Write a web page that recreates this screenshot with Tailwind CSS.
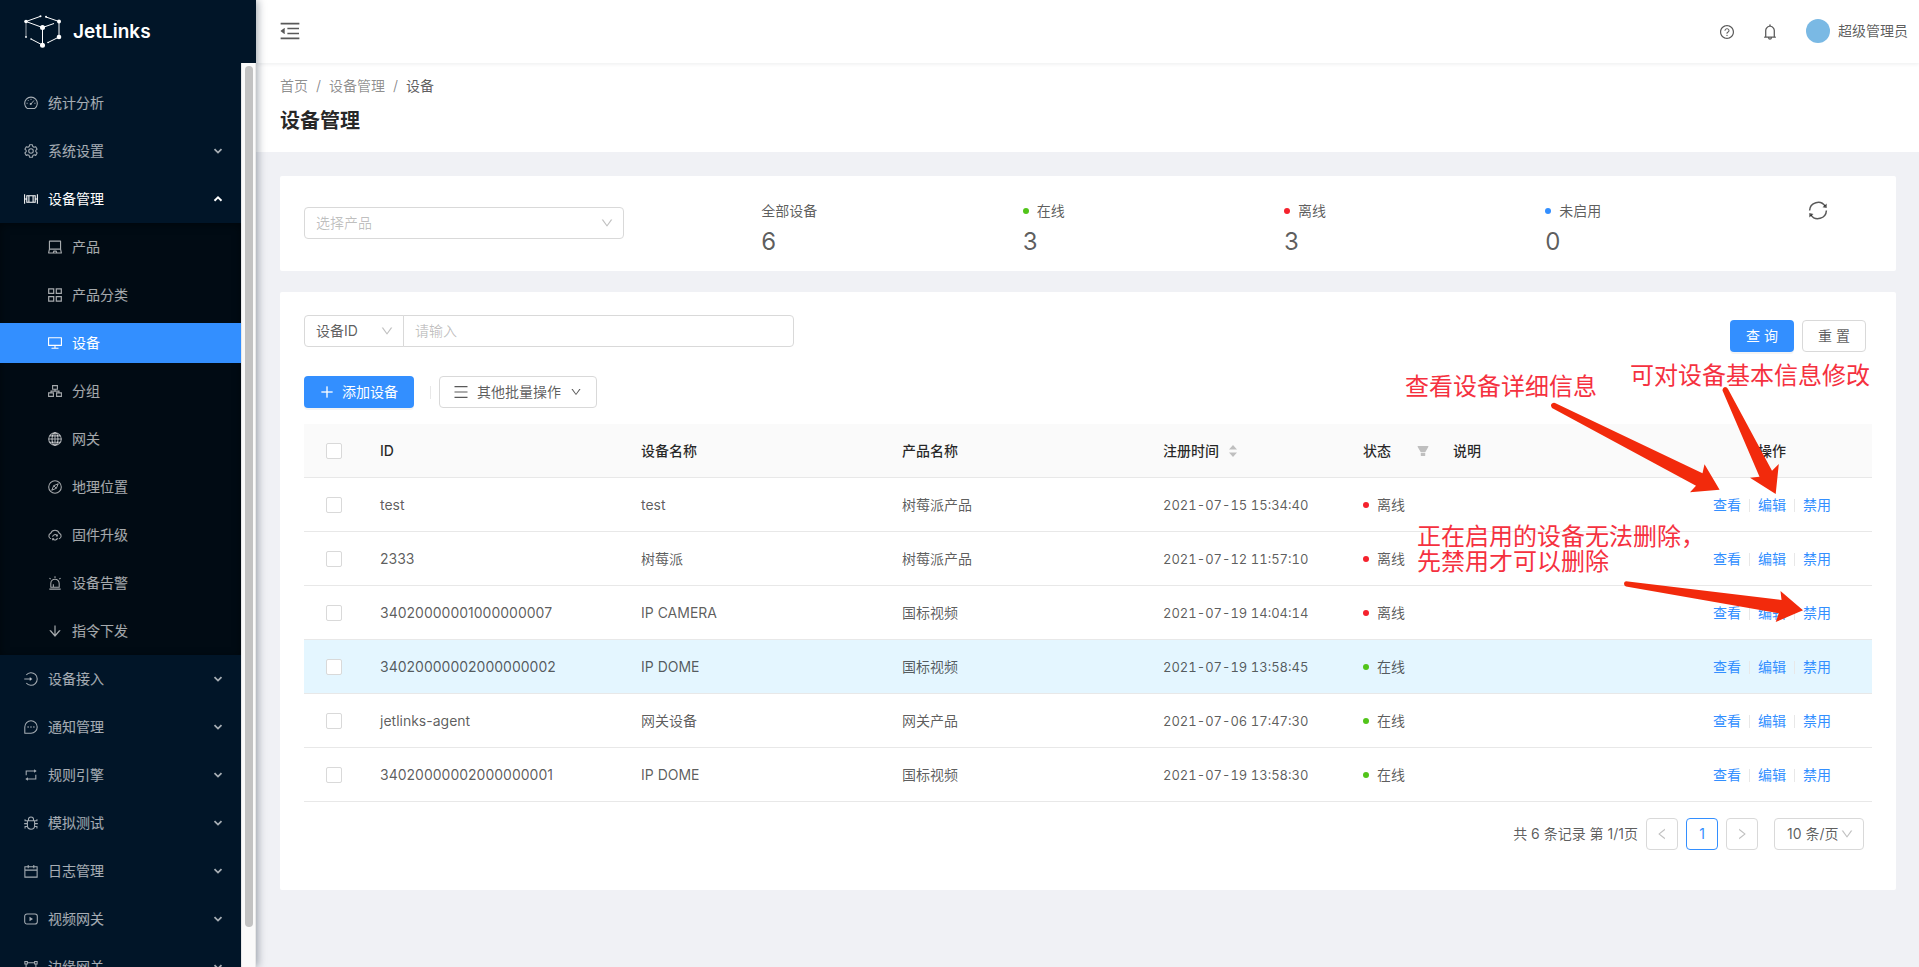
<!DOCTYPE html>
<html lang="zh-CN">
<head>
<meta charset="utf-8">
<meta name="viewport" content="width=device-width, initial-scale=1">
<title>设备管理 - JetLinks</title>
<script src="https://cdn.jsdelivr.net/npm/@tailwindcss/browser@4"></script>
</head>
<body class="flex h-screen overflow-hidden bg-[#f0f1f5] font-['Inter','Noto_Sans_CJK_SC',sans-serif] text-sm leading-[22px] text-black/65">

<svg class="hidden" aria-hidden="true">
  <defs>
    <symbol id="down" viewBox="0 0 1024 1024"><path d="M884 256h-75c-5.100 0-9.900 2.500-12.900 6.600L512 654.200 227.900 262.600c-3-4.100-7.800-6.600-12.900-6.600h-75c-6.500 0-10.300 7.400-6.500 12.700l352.600 486.100c12.800 17.600 39 17.600 51.700 0l352.600-486.100c3.900-5.300.1-12.700-6.400-12.700z"/></symbol>
    <symbol id="left" viewBox="0 0 1024 1024"><path d="M724 218.300V141c0-6.700-7.700-10.400-12.900-6.300L260.300 486.800a31.860 31.860 0 0 0 0 50.300l450.800 352.100c5.300 4.100 12.900.4 12.900-6.300v-77.300c0-4.900-2.300-9.600-6.100-12.600l-360-281 360-281.100c3.800-3 6.100-7.700 6.100-12.600z"/></symbol>
    <symbol id="right" viewBox="0 0 1024 1024"><path d="M765.700 486.800L314.900 134.700A7.970 7.970 0 0 0 302 141v77.300c0 4.900 2.300 9.600 6.100 12.600l360 281.100-360 281.100c-3.900 3-6.100 7.700-6.100 12.600V883c0 6.700 7.700 10.400 12.900 6.300l450.800-352.100a31.960 31.960 0 0 0 0-50.400z"/></symbol>
    <symbol id="chev" viewBox="0 0 10 10"><path d="M1.500 3.200L5 6.600l3.500-3.400" fill="none" stroke="currentColor" stroke-width="1.800"/></symbol>
    <symbol id="chev-up" viewBox="0 0 10 10"><path d="M1.500 6.800L5 3.400l3.500 3.400" fill="none" stroke="currentColor" stroke-width="1.900"/></symbol>
    <symbol id="dashboard" viewBox="0 0 16 16"><path d="M3.600 14.200a7.200 7.200 0 1 1 8.800 0z" fill="none" stroke="currentColor" stroke-width="1.200" stroke-linejoin="round"/><path d="M8 3.200v1.300M2.900 8.300h1.300M11.800 8.300h1.300M4.400 4.700l.9.900M8 9l3.400-3.900" fill="none" stroke="currentColor" stroke-width="1.100"/><circle cx="7.700" cy="9.200" r="1.200"/></symbol>
    <symbol id="setting" viewBox="0 0 16 16"><path d="M6.400.9h3.200l.5 2 1.300.8 2-.6 1.600 2.800-1.500 1.400v1.500l1.500 1.400-1.600 2.800-2-.6-1.300.8-.5 2H6.400l-.5-2-1.300-.8-2 .6L1 10.200l1.500-1.400V7.300L1 5.900l1.600-2.800 2 .6 1.300-.8z" fill="none" stroke="currentColor" stroke-width="1.200" stroke-linejoin="round"/><circle cx="8" cy="8" r="2.600" fill="none" stroke="currentColor" stroke-width="1.200"/></symbol>
    <symbol id="devices" viewBox="0 0 16 16"><path d="M.7 2.500v11M15.300 2.500v11M3.200 4.200h9.600v7.600H3.200zM5.600 4.200v7.600M10.400 4.200v7.600M.7 8h2.500M12.800 8h2.500" fill="none" stroke="currentColor" stroke-width="1.200"/></symbol>
    <symbol id="laptop" viewBox="1.200 1.200 13.600 13.600"><path d="M2.600 10V2.300h10.800V10M2.600 10L1.800 13.800h12.400L13.400 10zM6.400 13.500l.4-1.500h2.400l.4 1.500" fill="none" stroke="currentColor" stroke-width="1.100" stroke-linejoin="round"/></symbol>
    <symbol id="appstore" viewBox="1 1 14 14"><path d="M1.700 1.900h5v4.500h-5zM9.300 1.900h5v4.500h-5zM1.700 9.600h5v4.500h-5zM9.300 9.600h5v4.500h-5z" fill="none" stroke="currentColor" stroke-width="1.200"/></symbol>
    <symbol id="desktop" viewBox="64 64 896 896"><path d="M928 140H96c-17.700 0-32 14.300-32 32v496c0 17.700 14.300 32 32 32h380v112H304c-8.800 0-16 7.200-16 16v48c0 4.400 3.600 8 8 8h432c4.400 0 8-3.600 8-8v-48c0-8.800-7.200-16-16-16H548V700h380c17.700 0 32-14.300 32-32V172c0-17.700-14.300-32-32-32zm-40 488H136V212h752v416z"/></symbol>
    <symbol id="group" viewBox="1 1 14 14"><path d="M5.600 2.600h4.800v3.600H5.600zM1.600 9.900h4.800v3.500H1.600zM9.600 9.900h4.800v3.500H9.600zM8 6.200v1.900M4 9.900V8.100h8v1.800" fill="none" stroke="currentColor" stroke-width="1.100"/></symbol>
    <symbol id="global" viewBox="0 0 16 16"><g fill="none" stroke="currentColor" stroke-width="1.200"><circle cx="8" cy="8" r="7.200"/><ellipse cx="8" cy="8" rx="3.400" ry="7.200"/><path d="M8 .8v14.400M.8 8h14.400M2 4.400h12M2 11.600h12"/></g></symbol>
    <symbol id="compass" viewBox="0 0 16 16"><circle cx="8" cy="8" r="7.200" fill="none" stroke="currentColor" stroke-width="1.200"/><path d="M11.700 4.300L9.500 9.500l-5.200 2.200 2.200-5.200zM6.500 6.500l3 3" fill="none" stroke="currentColor" stroke-width="1.100" stroke-linejoin="round"/></symbol>
    <symbol id="cloud" viewBox="0 0 16 16"><path d="M3.600 12.300A3.300 3.300 0 0 1 3.100 6a5.200 5.200 0 0 1 9.800 0 3.300 3.300 0 0 1-.5 6.300" fill="none" stroke="currentColor" stroke-width="1.200"/><path d="M5.200 10a2.900 2.900 0 0 1 5.200-1.300M10.800 11.200a2.900 2.900 0 0 1-5.200 1.300M10.700 7.400v1.700H9M5.300 13.900v-1.700H7" fill="none" stroke="currentColor" stroke-width="1.200"/></symbol>
    <symbol id="alert" viewBox="0 0 16 16"><path d="M1.500 15h13M3.200 12.800h9.600V8.500a4.800 4.800 0 0 0-9.600 0zM6.100 12.600V9.500M8 .4v1.800M1.700 2.400l1.300 1.300M14.300 2.400L13 3.700" fill="none" stroke="currentColor" stroke-width="1.200"/></symbol>
    <symbol id="arrow-down" viewBox="64 64 896 896"><path d="M862 465.300h-81c-4.600 0-9 2-12.100 5.500L550 723.100V160c0-4.400-3.600-8-8-8h-60c-4.400 0-8 3.600-8 8v563.100L255.100 470.800c-3-3.500-7.400-5.500-12.100-5.500h-81c-6.800 0-10.500 8.100-6 13.200L487.900 861a31.960 31.960 0 0 0 48.300 0L868 478.500c4.500-5.200.8-13.200-6-13.200z"/></symbol>
    <symbol id="login" viewBox="0 0 16 16"><path d="M2.600 3.400a7.100 7.100 0 1 1 0 9.200M.3 8h7.500" fill="none" stroke="currentColor" stroke-width="1.200"/><path d="M6.600 5.700L9.600 8l-3 2.300z"/></symbol>
    <symbol id="message" viewBox="0 0 16 16"><path d="M.9 15.100V8A7.100 7.100 0 1 1 8 15.100z" fill="none" stroke="currentColor" stroke-width="1.200" stroke-linejoin="round"/><circle cx="4.700" cy="8" r=".9"/><circle cx="8" cy="8" r=".9"/><circle cx="11.300" cy="8" r=".9"/></symbol>
    <symbol id="retweet" viewBox="0 0 16 16"><path d="M2.500 8.200V3.400H12M13.500 7.800v4.800H4" fill="none" stroke="currentColor" stroke-width="1.200"/><path d="M11.600 1.300l2.900 2.100-2.900 2.100zM4.400 10.500l-2.900 2.100 2.900 2.100z"/></symbol>
    <symbol id="bug" viewBox="0 0 16 16"><path d="M3.900 5.400h8.200V11a4.100 4.100 0 0 1-8.200 0zM5.100 5.400V4a2.900 2.900 0 0 1 5.800 0v1.400M.2 8.700h3.700M12.100 8.700h3.700M1.200 3.600v1.800h2.700M14.800 3.600v1.800h-2.700M1.200 14.200v-2.100h2.900M14.800 14.200v-2.100h-2.900" fill="none" stroke="currentColor" stroke-width="1.200"/></symbol>
    <symbol id="calendar" viewBox="0 0 16 16"><path d="M1 3.200h14v11.800H1zM1 7h14M4.800 1v3.800M11.200 1v3.800" fill="none" stroke="currentColor" stroke-width="1.200"/></symbol>
    <symbol id="video" viewBox="0 0 16 16"><rect x=".8" y="2.300" width="14.400" height="11.400" rx="2.600" fill="none" stroke="currentColor" stroke-width="1.200"/><path d="M6.300 5.500l4 2.500-4 2.500z"/></symbol>
    <symbol id="edge" viewBox="0 0 16 16"><path d="M1 1.800h2.800v2.800H1zM12.200 1.800H15v2.800h-2.800zM1 11.400h2.800v2.800H1zM12.200 11.400H15v2.800h-2.800zM3.800 3.200h8.400M2.400 4.600v6.800M13.600 4.600v6.800M3.800 12.800h8.400" fill="none" stroke="currentColor" stroke-width="1.200"/></symbol>
    <symbol id="filter" viewBox="0 0 1024 1024"><path d="M349 838c0 17.700 14.200 32 31.800 32h262.400c17.600 0 31.800-14.300 31.800-32V642H349v196zm531.100-684H143.900c-24.500 0-39.800 26.700-27.500 48l221.300 376h348.800l221.300-376c12.100-21.300-3.200-48-27.700-48z"/></symbol>
  </defs>
</svg>

<aside class="relative z-10 flex w-64 shrink-0 flex-col bg-[#011528] shadow-[2px_0_8px_rgba(0,21,41,0.35)]">
  <a href="#" class="flex h-[62px] shrink-0 items-center gap-[11px] pl-6 text-white">
    <svg class="h-9 w-[38px]" viewBox="24 12 38 36" fill="#fff" stroke="#fff" aria-hidden="true">
      <path d="M26 20.500L40 15.500M46 16l13 4.500M26 20.500l16.500 6 11.500-4M42.500 26.500v18M59 20.500V36M31 38l11.500 6M59 36l-11 5.500" fill="none" stroke-width="1"/>
      <path d="M26 20.500V36" fill="none" stroke-width="1" opacity=".6"/>
      <g stroke="none"><circle cx="26" cy="20.500" r="1.800"/><circle cx="40.500" cy="15.300" r="1"/><circle cx="46" cy="15.800" r="1"/><circle cx="59" cy="20.500" r="2"/><circle cx="42.500" cy="26.500" r="2.500"/><circle cx="59" cy="36" r="2.300"/><circle cx="42.500" cy="44.300" r="2.500"/><circle cx="26" cy="36" r=".9"/><circle cx="31" cy="38" r=".8"/><circle cx="48" cy="41.500" r=".8"/></g>
    </svg>
    <h1 class="pt-0.5 text-[19px] font-semibold">JetLinks</h1>
  </a>
  <div class="mt-px flex min-h-0 flex-1">
    <nav class="flex-1 overflow-hidden pt-4 text-white/65 [&_a]:my-1 [&_a]:flex [&_a]:h-10 [&_a]:items-center [&_a]:gap-[10px] [&_a]:pl-6 [&_button]:my-1 [&_button]:flex [&_button]:h-10 [&_button]:w-full [&_button]:items-center [&_button]:gap-[10px] [&_button]:pr-[18px] [&_button]:pl-6 [&_li]:flow-root [&_span]:flex-1 [&_span]:text-left [&_svg]:fill-current" aria-label="主菜单">
      <ul>
        <li><a href="#"><svg class="size-[14px]"><use href="#dashboard"/></svg><span>统计分析</span></a></li>
        <li><button type="button"><svg class="size-[14px]"><use href="#setting"/></svg><span>系统设置</span><svg class="size-[10px]"><use href="#chev"/></svg></button></li>
        <li>
          <button type="button" aria-expanded="true" class="text-white"><svg class="size-[14px]"><use href="#devices"/></svg><span>设备管理</span><svg class="size-[10px]"><use href="#chev-up"/></svg></button>
          <ul class="bg-[#010b14] shadow-[inset_0_2px_8px_rgba(0,0,0,0.45)] [&_a]:pl-12">
            <li><a href="#"><svg class="size-[14px]"><use href="#laptop"/></svg><span>产品</span></a></li>
            <li><a href="#"><svg class="size-[14px]"><use href="#appstore"/></svg><span>产品分类</span></a></li>
            <li><a href="#" aria-current="page" class="bg-[#338fff] text-white"><svg class="size-[14px]"><use href="#desktop"/></svg><span>设备</span></a></li>
            <li><a href="#"><svg class="size-[14px]"><use href="#group"/></svg><span>分组</span></a></li>
            <li><a href="#"><svg class="size-[14px]"><use href="#global"/></svg><span>网关</span></a></li>
            <li><a href="#"><svg class="size-[14px]"><use href="#compass"/></svg><span>地理位置</span></a></li>
            <li><a href="#"><svg class="size-[14px]"><use href="#cloud"/></svg><span>固件升级</span></a></li>
            <li><a href="#"><svg class="size-[14px]"><use href="#alert"/></svg><span>设备告警</span></a></li>
            <li><a href="#"><svg class="size-[14px]"><use href="#arrow-down"/></svg><span>指令下发</span></a></li>
          </ul>
        </li>
        <li><button type="button"><svg class="size-[14px]"><use href="#login"/></svg><span>设备接入</span><svg class="size-[10px]"><use href="#chev"/></svg></button></li>
        <li><button type="button"><svg class="size-[14px]"><use href="#message"/></svg><span>通知管理</span><svg class="size-[10px]"><use href="#chev"/></svg></button></li>
        <li><button type="button"><svg class="size-[14px]"><use href="#retweet"/></svg><span>规则引擎</span><svg class="size-[10px]"><use href="#chev"/></svg></button></li>
        <li><button type="button"><svg class="size-[14px]"><use href="#bug"/></svg><span>模拟测试</span><svg class="size-[10px]"><use href="#chev"/></svg></button></li>
        <li><button type="button"><svg class="size-[14px]"><use href="#calendar"/></svg><span>日志管理</span><svg class="size-[10px]"><use href="#chev"/></svg></button></li>
        <li><button type="button"><svg class="size-[14px]"><use href="#video"/></svg><span>视频网关</span><svg class="size-[10px]"><use href="#chev"/></svg></button></li>
        <li><button type="button"><svg class="size-[14px]"><use href="#edge"/></svg><span>边缘网关</span><svg class="size-[10px]"><use href="#chev"/></svg></button></li>
      </ul>
    </nav>
    <div class="flex w-[15px] justify-center border-x border-[#e8e8e8] bg-[#fafafa] pt-[3px]">
      <div class="h-[95.6%] w-2 rounded-full bg-[#c2c2c2]"></div>
    </div>
  </div>
</aside>

<div class="flex min-w-0 flex-1 flex-col">
  <header class="relative flex h-[63px] shrink-0 items-center justify-between bg-white pr-[11px] pb-px pl-[22px] shadow-[0_1px_4px_rgba(0,21,41,0.08)]">
    <button type="button" aria-label="折叠菜单"><svg class="size-6 fill-current" viewBox="0 0 1024 1024"><path d="M408 442h480c4.400 0 8-3.600 8-8v-56c0-4.400-3.600-8-8-8H408c-4.400 0-8 3.600-8 8v56c0 4.400 3.600 8 8 8zm-8 204c0 4.400 3.600 8 8 8h480c4.400 0 8-3.600 8-8v-56c0-4.400-3.600-8-8-8H408c-4.400 0-8 3.600-8 8v56zm504-486H120c-4.400 0-8 3.600-8 8v56c0 4.400 3.600 8 8 8h784c4.400 0 8-3.600 8-8v-56c0-4.400-3.600-8-8-8zm0 632H120c-4.400 0-8 3.600-8 8v56c0 4.400 3.600 8 8 8h784c4.400 0 8-3.600 8-8v-56c0-4.400-3.600-8-8-8zM115.400 518.900L271.700 642c5.800 4.600 14.400.5 14.400-6.900V388.900c0-7.400-8.500-11.500-14.400-6.900L115.400 505.100a8.740 8.740 0 0 0 0 13.800z"/></svg></button>
    <div class="flex items-center gap-[26px]">
      <button type="button" aria-label="帮助"><svg class="mt-px size-4 fill-current" viewBox="0 0 1024 1024"><path d="M512 64C264.600 64 64 264.600 64 512s200.600 448 448 448 448-200.600 448-448S759.400 64 512 64zm0 820c-205.400 0-372-166.600-372-372s166.600-372 372-372 372 166.600 372 372-166.600 372-372 372z"/><path d="M623.600 316.700C593.600 290.400 554 276 512 276s-81.600 14.500-111.600 40.700C369.200 344 352 380.700 352 420v7.600c0 4.400 3.600 8 8 8h48c4.400 0 8-3.600 8-8V420c0-44.100 43.100-80 96-80s96 35.900 96 80c0 31.100-22 59.600-56.100 72.700-21.200 8.100-39.200 22.300-52.100 40.900-13.100 19-19.900 41.800-19.900 64.900V620c0 4.400 3.600 8 8 8h48c4.400 0 8-3.600 8-8v-22.700a48.300 48.300 0 0 1 30.900-44.800c59-22.700 97.100-74.700 97.100-132.500.1-39.300-17.100-76-48.300-103.300zM472 732a40 40 0 1 0 80 0 40 40 0 1 0-80 0z"/></svg></button>
      <button type="button" aria-label="通知"><svg class="mt-px size-[18px] fill-current" viewBox="0 0 1024 1024"><path d="M816 768h-24V428c0-141.100-104.300-257.700-240-277.100V112c0-22.100-17.900-40-40-40s-40 17.900-40 40v38.900c-135.700 19.400-240 136-240 277.100v340h-24c-17.700 0-32 14.300-32 32v32c0 4.400 3.600 8 8 8h216c0 61.800 50.200 112 112 112s112-50.200 112-112h216c4.400 0 8-3.600 8-8v-32c0-17.700-14.300-32-32-32zM512 888c-26.500 0-48-21.500-48-48h96c0 26.500-21.500 48-48 48zM304 768V428c0-55.600 21.600-107.800 60.900-147.100S456.400 220 512 220c55.600 0 107.800 21.600 147.100 60.900S720 372.400 720 428v340H304z"/></svg></button>
      <a href="#" class="flex items-center gap-2 pl-px"><span class="size-6 rounded-full bg-[#7ab9e4]"></span>超级管理员</a>
    </div>
  </header>

  <div class="bg-white px-6 pt-3 pb-[15px]">
    <nav class="flex gap-2 text-black/45" aria-label="面包屑"><a href="#">首页</a><span>/</span><a href="#">设备管理</a><span>/</span><span class="text-black/65">设备</span></nav>
    <h2 class="mt-[9px] text-xl leading-[31px] font-semibold text-black/85">设备管理</h2>
  </div>

  <main class="flex flex-col gap-[21px] py-6 pr-[23px] pl-6">
    <section class="grid h-[95px] grid-cols-[7fr_4fr_4fr_4fr_4fr_1fr] rounded-xs bg-white px-6 pt-6">
      <div class="relative mt-[7px] h-8 w-[70%]">
        <select aria-label="选择产品" class="size-full appearance-none rounded border border-[#d9d9d9] bg-white px-[11px] text-black/25"><option>选择产品</option></select>
        <svg class="absolute top-[9px] right-[10px] size-[14px] fill-black/25"><use href="#down"/></svg>
      </div>
      <div><div>全部设备</div><div class="text-2xl leading-10">6</div></div>
      <div><div class="flex items-center gap-2"><i class="size-[6px] rounded-full bg-[#52c41a]"></i>在线</div><div class="text-2xl leading-10">3</div></div>
      <div><div class="flex items-center gap-2"><i class="size-[6px] rounded-full bg-[#f5222d]"></i>离线</div><div class="text-2xl leading-10">3</div></div>
      <div><div class="flex items-center gap-2"><i class="size-[6px] rounded-full bg-[#338fff]"></i>未启用</div><div class="text-2xl leading-10">0</div></div>
      <button type="button" aria-label="刷新" class="self-start"><svg class="size-[22px]" viewBox="0 0 22 22"><path d="M2.600 10.500a8.500 8.500 0 0 1 15.600-4.300M19.400 10.500A8.500 8.500 0 0 1 3.800 14.800" fill="none" stroke="currentColor" stroke-width="1.500"/><path d="M19.700 3.600v4.300l-4.200-.7zM2.300 17.600v-4.500l4.200.9z" fill="currentColor"/></svg></button>
    </section>

    <section class="relative rounded-xs bg-white px-6 pt-[23px] pb-10">
      <form class="flex h-[37px] justify-between">
        <div class="flex h-8 w-[490px]">
          <div class="relative w-[100px]">
            <select aria-label="查询字段" class="size-full appearance-none rounded-l border border-[#d9d9d9] bg-white px-[11px]"><option>设备ID</option></select>
            <svg class="absolute top-[9px] right-[10px] size-[14px] fill-black/25"><use href="#down"/></svg>
          </div>
          <input type="text" aria-label="查询内容" placeholder="请输入" class="-ml-px min-w-0 flex-1 rounded-r border border-[#d9d9d9] px-[11px] placeholder:text-black/25">
        </div>
        <div class="flex gap-2 self-end pr-[6px]">
          <button type="submit" class="h-8 w-16 rounded bg-[#338fff] text-white shadow-[0_2px_0_rgba(0,0,0,0.045)]">查 询</button>
          <button type="reset" class="h-8 w-16 rounded border border-[#d9d9d9] bg-white">重 置</button>
        </div>
      </form>

      <div class="mt-6 flex items-center">
        <button type="button" class="flex h-8 items-center gap-2 rounded bg-[#338fff] px-4 text-white shadow-[0_2px_0_rgba(0,0,0,0.045)]"><svg class="size-[14px] fill-current" viewBox="0 0 1024 1024"><path d="M482 112h60q8 0 8 8v784q0 8-8 8h-60q-8 0-8-8V120q0-8 8-8zM120 474h784q8 0 8 8v60q0 8-8 8H120q-8 0-8-8v-60q0-8 8-8z" stroke="currentColor" stroke-width="24"/></svg>添加设备</button>
        <span class="mr-2 ml-4 h-[13px] w-px bg-[#e8e8e8]"></span>
        <button type="button" class="flex h-8 items-center gap-2 rounded border border-[#d9d9d9] bg-white pr-[14px] pl-[13px]"><svg class="size-4" viewBox="0 0 16 16"><path d="M1.500 2.700h13M1.500 8h13M1.500 13.300h13" stroke="currentColor" stroke-width="1.200"/></svg>其他批量操作<svg class="ml-px size-3 fill-current"><use href="#down"/></svg></button>
      </div>

      <table class="mt-4 w-full table-fixed border-collapse text-left [&_input]:mx-auto [&_input]:block [&_input]:size-4 [&_input]:appearance-none [&_input]:rounded-xs [&_input]:border [&_input]:border-[#d9d9d9] [&_input]:bg-white [&_tbody_a]:text-[#338fff] [&_tbody_tr]:h-[54px] [&_td]:px-4 [&_td]:pt-0.5 [&_th]:px-4 [&_th]:pt-0.5 [&_th]:font-medium [&_time]:text-[13px] [&_time]:tabular-nums [&_tr]:border-b [&_tr]:border-[#e8e8e8]">
        <colgroup><col class="w-[60px]"><col class="w-[261px]"><col class="w-[261px]"><col class="w-[261px]"><col class="w-[200px]"><col class="w-[90px]"><col><col class="w-[200px]"></colgroup>
        <thead class="bg-[#fafafa] text-black/85">
          <tr class="h-[53px]">
            <th><input type="checkbox" aria-label="全选"></th>
            <th>ID</th><th>设备名称</th><th>产品名称</th>
            <th><div class="flex items-center gap-[9px]">注册时间<svg class="h-3 w-[10px] fill-[#bfbfbf]" viewBox="0 0 10 12"><path d="M5 0l4 4.500H1zM5 12L1 7.500h8z"/></svg></div></th>
            <th><div class="flex items-center justify-between">状态<svg class="-mr-[9px] size-[14px] shrink-0 fill-[#bfbfbf]"><use href="#filter"/></svg></div></th>
            <th>说明</th><th class="text-center">操作</th>
          </tr>
        </thead>
        <tbody>
          <tr><td><input type="checkbox" aria-label="选择 test"></td><td>test</td><td>test</td><td>树莓派产品</td><td><time>2021-07-15 15:34:40</time></td>
            <td><div class="flex items-center gap-2 whitespace-nowrap"><i class="size-[6px] shrink-0 rounded-full bg-[#f5222d]"></i>离线</div></td><td></td>
            <td><div class="flex items-center justify-center gap-2"><a href="#">查看</a><i class="h-[13px] w-px bg-[#e8e8e8]"></i><a href="#">编辑</a><i class="h-[13px] w-px bg-[#e8e8e8]"></i><a href="#">禁用</a></div></td></tr>
          <tr><td><input type="checkbox" aria-label="选择 2333"></td><td>2333</td><td>树莓派</td><td>树莓派产品</td><td><time>2021-07-12 11:57:10</time></td>
            <td><div class="flex items-center gap-2 whitespace-nowrap"><i class="size-[6px] shrink-0 rounded-full bg-[#f5222d]"></i>离线</div></td><td></td>
            <td><div class="flex items-center justify-center gap-2"><a href="#">查看</a><i class="h-[13px] w-px bg-[#e8e8e8]"></i><a href="#">编辑</a><i class="h-[13px] w-px bg-[#e8e8e8]"></i><a href="#">禁用</a></div></td></tr>
          <tr><td><input type="checkbox" aria-label="选择 34020000001000000007"></td><td>34020000001000000007</td><td>IP CAMERA</td><td>国标视频</td><td><time>2021-07-19 14:04:14</time></td>
            <td><div class="flex items-center gap-2 whitespace-nowrap"><i class="size-[6px] shrink-0 rounded-full bg-[#f5222d]"></i>离线</div></td><td></td>
            <td><div class="flex items-center justify-center gap-2"><a href="#">查看</a><i class="h-[13px] w-px bg-[#e8e8e8]"></i><a href="#">编辑</a><i class="h-[13px] w-px bg-[#e8e8e8]"></i><a href="#">禁用</a></div></td></tr>
          <tr class="bg-[#e4f6ff]"><td><input type="checkbox" aria-label="选择 34020000002000000002"></td><td>34020000002000000002</td><td>IP DOME</td><td>国标视频</td><td><time>2021-07-19 13:58:45</time></td>
            <td><div class="flex items-center gap-2 whitespace-nowrap"><i class="size-[6px] shrink-0 rounded-full bg-[#52c41a]"></i>在线</div></td><td></td>
            <td><div class="flex items-center justify-center gap-2"><a href="#">查看</a><i class="h-[13px] w-px bg-[#e8e8e8]"></i><a href="#">编辑</a><i class="h-[13px] w-px bg-[#e8e8e8]"></i><a href="#">禁用</a></div></td></tr>
          <tr><td><input type="checkbox" aria-label="选择 jetlinks-agent"></td><td>jetlinks-agent</td><td>网关设备</td><td>网关产品</td><td><time>2021-07-06 17:47:30</time></td>
            <td><div class="flex items-center gap-2 whitespace-nowrap"><i class="size-[6px] shrink-0 rounded-full bg-[#52c41a]"></i>在线</div></td><td></td>
            <td><div class="flex items-center justify-center gap-2"><a href="#">查看</a><i class="h-[13px] w-px bg-[#e8e8e8]"></i><a href="#">编辑</a><i class="h-[13px] w-px bg-[#e8e8e8]"></i><a href="#">禁用</a></div></td></tr>
          <tr><td><input type="checkbox" aria-label="选择 34020000002000000001"></td><td>34020000002000000001</td><td>IP DOME</td><td>国标视频</td><td><time>2021-07-19 13:58:30</time></td>
            <td><div class="flex items-center gap-2 whitespace-nowrap"><i class="size-[6px] shrink-0 rounded-full bg-[#52c41a]"></i>在线</div></td><td></td>
            <td><div class="flex items-center justify-center gap-2"><a href="#">查看</a><i class="h-[13px] w-px bg-[#e8e8e8]"></i><a href="#">编辑</a><i class="h-[13px] w-px bg-[#e8e8e8]"></i><a href="#">禁用</a></div></td></tr>
        </tbody>
      </table>

      <div class="mt-4 flex items-center justify-end gap-2 pr-2">
        <span>共 6 条记录 第 1/1页</span>
        <button type="button" aria-label="上一页" class="flex size-8 items-center justify-center rounded border border-[#d9d9d9] bg-white"><svg class="size-[14px] fill-black/25"><use href="#left"/></svg></button>
        <button type="button" aria-current="page" class="size-8 rounded border border-[#338fff] bg-white text-[#338fff]">1</button>
        <button type="button" aria-label="下一页" class="flex size-8 items-center justify-center rounded border border-[#d9d9d9] bg-white"><svg class="size-[14px] fill-black/25"><use href="#right"/></svg></button>
        <div class="relative ml-2 h-8 w-[90px]">
          <select aria-label="每页条数" class="size-full appearance-none rounded border border-[#d9d9d9] bg-white pl-3"><option>10 条/页</option></select>
          <svg class="absolute top-[9px] right-[10px] size-[14px] fill-black/25"><use href="#down"/></svg>
        </div>
      </div>

      <!-- 操作说明标注 -->
      <div class="pointer-events-none absolute top-0 right-0 h-[360px] w-[500px] text-2xl leading-[25px] whitespace-nowrap text-[#f5313f]">
        <svg class="absolute inset-0 size-full" viewBox="1396 292 500 360" fill="#f22a0c" aria-hidden="true">
          <path d="M1555 403L1702.500 473.300 1704.500 464.300 1719.600 489.700 1690 492.300 1696 485.700 1552 408Q1550 405 1552 403.500 1553.500 402.500 1555 403z"/>
          <path d="M1728 389L1772 470.700 1778.800 464 1775.700 494 1750 477.700 1759.500 476.700 1722.500 390.500Q1722.500 387.500 1725 387 1727 387 1728 389z"/>
          <path d="M1626 581.200L1781.500 600 1780.500 591 1803 610.300 1775.700 622 1778.800 613.300 1626 586.500Q1624 586 1624 583.700 1624 581.300 1626 581.200z"/>
        </svg>
        <p class="absolute top-[82px] left-[9px]">查看设备详细信息</p>
        <p class="absolute top-[71px] left-[234px]">可对设备基本信息修改</p>
        <p class="absolute top-[232px] left-[21px]">正在启用的设备无法删除，<br>先禁用才可以删除</p>
      </div>
    </section>
  </main>
</div>
</body>
</html>
